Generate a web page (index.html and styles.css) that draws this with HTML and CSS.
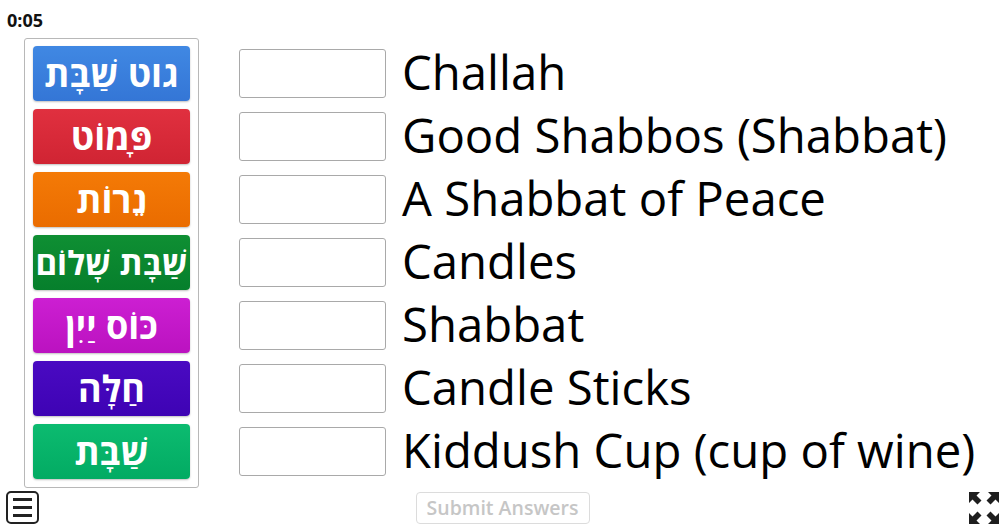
FILE: index.html
```html
<!DOCTYPE html>
<html lang="en">
<head>
<meta charset="utf-8">
<title>Match</title>
<link rel="stylesheet" href="styles.css">
</head>
<body>
<div class="timer">0:05</div>
<div class="main">
  <div class="panel">
    <div class="tile blue" dir="rtl">גוט שַׁבָּת</div>
    <div class="tile red" dir="rtl">פָּמוֹט</div>
    <div class="tile orange" dir="rtl">נֵרוֹת</div>
    <div class="tile green tight" dir="rtl">שַׁבָּת שָׁלוֹם</div>
    <div class="tile magenta" dir="rtl">כּוֹס יַיִן</div>
    <div class="tile indigo" dir="rtl">חַלָּה</div>
    <div class="tile emerald" dir="rtl">שַׁבָּת</div>
  </div>
  <div class="matches">
    <div class="row"><div class="slot"></div><div class="label">Challah</div></div>
    <div class="row"><div class="slot"></div><div class="label">Good Shabbos (Shabbat)</div></div>
    <div class="row"><div class="slot"></div><div class="label">A Shabbat of Peace</div></div>
    <div class="row"><div class="slot"></div><div class="label">Candles</div></div>
    <div class="row"><div class="slot"></div><div class="label">Shabbat</div></div>
    <div class="row"><div class="slot"></div><div class="label">Candle Sticks</div></div>
    <div class="row"><div class="slot"></div><div class="label">Kiddush Cup (cup of wine)</div></div>
  </div>
</div>
<div class="bottombar">
  <div class="left">
    <div class="menu"><span></span><span></span><span></span></div>
  </div>
  <div class="submit">Submit Answers</div>
  <div class="right">
    <svg class="fs" width="30" height="32" viewBox="0 0 30 32">
      <path d="M0 0 H11 L7.5 3.5 L12.5 8.5 L8.5 12.5 L3.5 7.5 L0 11 Z" fill="#1e1e1e"/>
      <path d="M30 0 V11 L26.5 7.5 L21.5 12.5 L17.5 8.5 L22.5 3.5 L19 0 Z" fill="#1e1e1e"/>
      <path d="M0 32 V21 L3.5 24.5 L8.5 19.5 L12.5 23.5 L7.5 28.5 L11 32 Z" fill="#1e1e1e"/>
      <path d="M30 32 H19 L22.5 28.5 L17.5 23.5 L21.5 19.5 L26.5 24.5 L30 21 Z" fill="#1e1e1e"/>
    </svg>
  </div>
</div>
</body>
</html>
```
FILE: styles.css
```css
html, body {
  margin: 0;
  padding: 0;
  background: #ffffff;
  font-family: "Open Sans", "Noto Sans", "DejaVu Sans", sans-serif;
  color: #000;
}
.timer {
  margin: 10px 0 0 7px;
  height: 20px;
  line-height: 20px;
  font-size: 18px;
  font-weight: 700;
  color: #111;
}
.main {
  display: flex;
  align-items: flex-start;
  margin-top: 8px;
  padding-left: 24px;
}
.panel {
  width: 175px;
  box-sizing: border-box;
  border: 1px solid #b8b8b8;
  border-radius: 3px;
  padding: 7px 8px 8px 8px;
  display: flex;
  flex-direction: column;
  gap: 8px;
}
.tile {
  height: 55px;
  border-radius: 4px;
  display: flex;
  align-items: center;
  justify-content: center;
  color: #fff;
  font-size: 36px;
  font-weight: 700;
  box-shadow: 0 1px 2px rgba(0,0,0,0.25);
  line-height: 1;
  white-space: nowrap;
}
.tile.tight { font-size: 33px; }
.blue { background: linear-gradient(#4088e3, #3476d6); }
.red { background: linear-gradient(#e0303f, #d02433); }
.orange { background: linear-gradient(#f47a06, #ea6c00); }
.green { background: linear-gradient(#0f8f33, #067f2c); }
.magenta { background: linear-gradient(#cc1fd2, #bb12c0); }
.indigo { background: linear-gradient(#4a0ac2, #3e03b4); }
.emerald { background: linear-gradient(#0cbb70, #02ab63); }
.matches {
  margin-left: 40px;
  margin-top: 11px;
  display: flex;
  flex-direction: column;
  gap: 14px;
}
.row {
  display: flex;
  align-items: flex-start;
  height: 49px;
}
.slot {
  width: 147px;
  height: 49px;
  box-sizing: border-box;
  border: 1px solid #a9a9a9;
  border-radius: 3px;
  flex: none;
}
.label {
  margin-left: 16px;
  font-size: 47.3px;
  line-height: 45px;
  white-space: nowrap;
}
.bottombar {
  display: grid;
  grid-template-columns: 1fr auto 1fr;
  align-items: center;
  margin-top: 3px;
  padding: 0 6px;
  height: 33px;
}
.left { display: flex; }
.right { display: flex; justify-content: flex-end; }
.menu {
  width: 33px;
  height: 33px;
  box-sizing: border-box;
  border: 2px solid #222;
  border-radius: 5px;
  display: flex;
  flex-direction: column;
  justify-content: center;
  align-items: center;
  gap: 5px;
}
.menu span {
  display: block;
  width: 19px;
  height: 3px;
  background: #222;
}
.submit {
  width: 174px;
  height: 32px;
  box-sizing: border-box;
  border: 1px solid #dcdcdc;
  border-radius: 4px;
  display: flex;
  align-items: center;
  justify-content: center;
  font-size: 19.5px;
  font-weight: 600;
  color: #c6c6c6;
}
.fs { display: block; }
```
